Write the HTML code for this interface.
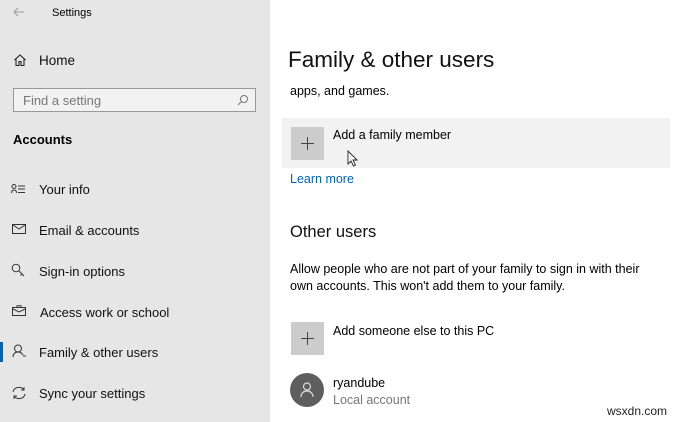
<!DOCTYPE html>
<html><head><style>
*{margin:0;padding:0;box-sizing:border-box}
body{width:680px;height:422px;overflow:hidden;font-family:"Liberation Sans",sans-serif;position:relative;background:#fff;color:#000}
.side{position:absolute;left:0;top:0;width:270px;height:422px;background:#e6e6e6}
.a{position:absolute;white-space:nowrap}
.nav{font-size:13px;color:#111}
.ic{position:absolute}
.pl{position:absolute;width:33px;height:33px;background:#ccc}
</style></head><body>
<div class="side">
<svg class="ic" style="left:13px;top:7px" width="12" height="10"><path d="M11 5H1M5 1L1 5l4 4" fill="none" stroke="#999"/></svg>
<div class="a" style="left:52px;top:7px;font-size:11px">Settings</div>
<svg class="ic" style="left:13px;top:53px" width="14" height="14" viewBox="0 0 14 14"><path d="M1.5 7L7 2l5.5 5M3 6v6.5h3v-4h2v4h3V6" fill="none" stroke="#222" stroke-width="1.1"/></svg>
<div class="a nav" style="left:39px;top:53px;font-size:13.5px">Home</div>
<div class="a" style="left:13px;top:88px;width:243px;height:24px;border:1px solid #999;background:#f2f2f2"></div>
<div class="a" style="left:23px;top:93px;font-size:13px;color:#777">Find a setting</div>
<svg class="ic" style="left:237px;top:94px" width="12" height="12" viewBox="0 0 12 12"><circle cx="7" cy="5" r="3.5" fill="none" stroke="#777"/><path d="M4.5 7.5L1 11" stroke="#777"/></svg>
<div class="a" style="left:13px;top:132px;font-size:13px;font-weight:bold">Accounts</div>
<svg class="ic" style="left:11px;top:184px" width="15" height="10"><circle cx="3" cy="2.5" r="2" fill="none" stroke="#333"/><path d="M0.5 9c0-2 1-3 2.5-3s2.5 1 2.5 3M7 2h7M7 5h7M7 8.5h7" fill="none" stroke="#333"/></svg>
<div class="a nav" style="left:39px;top:182px">Your info</div>
<svg class="ic" style="left:12px;top:224px" width="14" height="10"><rect x="0.5" y="0.5" width="13" height="9" fill="none" stroke="#333"/><path d="M1 1l6 4 6-4" fill="none" stroke="#333"/></svg>
<div class="a nav" style="left:39px;top:223px">Email &amp; accounts</div>
<svg class="ic" style="left:11px;top:263px" width="15" height="15"><circle cx="5" cy="5" r="3.8" fill="none" stroke="#333"/><path d="M8 8l5 5M11 11l-1.5 1.5" fill="none" stroke="#333"/></svg>
<div class="a nav" style="left:39px;top:264px">Sign-in options</div>
<svg class="ic" style="left:12px;top:305px" width="15" height="12"><rect x="0.5" y="2.5" width="13" height="8" fill="none" stroke="#333"/><path d="M5 2.5V.8h4v1.7M1 4l6 3 6-3" fill="none" stroke="#333"/></svg>
<div class="a nav" style="left:40px;top:305px">Access work or school</div>
<div class="a" style="left:0;top:342px;width:3px;height:20px;background:#0063b1"></div>
<svg class="ic" style="left:12px;top:344px" width="15" height="15"><circle cx="6" cy="4.5" r="3.5" fill="none" stroke="#333"/><path d="M1 13c0-3 2-5 5-5s4 1.5 5 3M11 12h3" fill="none" stroke="#333"/></svg>
<div class="a nav" style="left:39px;top:345px">Family &amp; other users</div>
<svg class="ic" style="left:11px;top:385px" width="16" height="16"><path d="M2 7a6 5.5 0 0 1 11-2M14 9a6 5.5 0 0 1-11 2M13 2v3h-3M3 14v-3h3" fill="none" stroke="#333"/></svg>
<div class="a nav" style="left:39px;top:386px">Sync your settings</div>
</div>
<div class="a" style="left:288px;top:47px;font-size:22.5px;color:#111">Family &amp; other users</div>
<div class="a" style="left:290px;top:84px;font-size:12.5px">apps, and games.</div>
<div class="a" style="left:282px;top:118px;width:388px;height:50px;background:#f2f2f2"></div>
<div class="pl" style="left:291px;top:127px"></div>
<svg class="ic" style="left:291px;top:127px" width="33" height="33"><path d="M16.5 10v13M10 16.5h13" stroke="#444" stroke-width="1"/></svg>
<div class="a" style="left:333px;top:128px;font-size:12.5px">Add a family member</div>
<svg class="ic" style="left:347px;top:150px" width="12" height="17"><path d="M1 1v13l3-3 2.5 5 2-1-2.5-5h4z" fill="#fff" stroke="#222" stroke-width="0.9"/></svg>
<div class="a" style="left:290px;top:172px;font-size:12.5px;color:#0063b1">Learn more</div>
<div class="a" style="left:290px;top:223px;font-size:16.5px;color:#111">Other users</div>
<div class="a" style="left:290px;top:261px;font-size:12.5px;line-height:17px">Allow people who are not part of your family to sign in with their<br>own accounts. This won't add them to your family.</div>
<div class="pl" style="left:291px;top:322px"></div>
<svg class="ic" style="left:291px;top:322px" width="33" height="33"><path d="M16.5 10v13M10 16.5h13" stroke="#444" stroke-width="1"/></svg>
<div class="a" style="left:333px;top:324px;font-size:12.5px">Add someone else to this PC</div>
<div class="a" style="left:290px;top:373px;width:34px;height:34px;border-radius:50%;background:#5e5e5e"></div>
<svg class="ic" style="left:299px;top:381px" width="16" height="18"><circle cx="8" cy="5.5" r="3.5" fill="none" stroke="#ddd" stroke-width="1.2"/><path d="M2 16c0-4 3-6 6-6s6 2 6 6" fill="none" stroke="#ddd" stroke-width="1.2"/></svg>
<div class="a" style="left:333px;top:376px;font-size:12.5px">ryandube</div>
<div class="a" style="left:333px;top:393px;font-size:12.5px;color:#777">Local account</div>
<div class="a" style="left:607px;top:404px;font-size:12px;color:#222">wsxdn.com</div>
</body></html>
